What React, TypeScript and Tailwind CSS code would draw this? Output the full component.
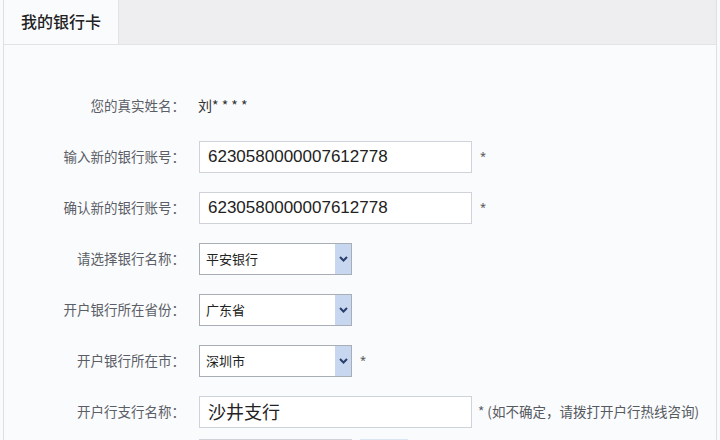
const cjk = { fontFamily: '"Noto Sans CJK SC", "Noto Sans", sans-serif' };
const num = { fontFamily: '"Liberation Sans", Arial, sans-serif' };

function Label({ text }: { text: string }) {
  return (
    <div className="w-[181px] shrink-0 text-right text-[13.5px] text-[#5a5e66]" style={cjk}>
      {text}
    </div>
  );
}

function Select({ value }: { value: string }) {
  return (
    <div className="flex h-[32px] w-[153px] border border-[#a9adb5] bg-white">
      <div className="flex flex-1 items-center pl-[6px] text-[13px] text-[#222]" style={cjk}>
        {value}
      </div>
      <div className="flex w-[16px] items-center justify-center bg-[#c6d7ef]">
        <svg width="9" height="6" viewBox="0 0 9 6">
          <path d="M1 1l3.5 3.5L8 1" fill="none" stroke="#2a3f6b" strokeWidth="2" />
        </svg>
      </div>
    </div>
  );
}

function Input({ value, big }: { value: string; big?: boolean }) {
  return (
    <div
      className={
        "flex h-[32px] w-[273px] items-center border border-[#cfd2d8] bg-white pl-[8px] text-[#222] " +
        (big ? "text-[18px]" : "text-[17px]")
      }
      style={big ? cjk : num}
    >
      {value}
    </div>
  );
}

function Star() {
  return <span className="ml-[8px] text-[11px] text-[#555]">*</span>;
}

export default function App() {
  return (
    <div className="h-[440px] w-[720px] overflow-hidden bg-[#fafbfd]">
      <div className="ml-[3px] h-full w-[714px] border-x border-[#dfe0e4]">
        <div className="flex h-[45px] border-b border-[#e2e3e7]">
          <div
            className="flex w-[114px] items-center justify-center bg-[#fafbfd] pb-[2px] text-[16px] font-medium text-[#222]"
            style={cjk}
          >
            我的银行卡
          </div>
          <div className="flex-1 border-l border-[#e2e3e7] bg-[#eeeef0]" />
        </div>

        <div className="flex flex-col pt-[35px]">
          <div className="flex h-[51px] items-center">
            <Label text="您的真实姓名：" />
            <div className="ml-[13px] text-[14px] text-[#333]" style={cjk}>
              刘* * * *
            </div>
          </div>
          <div className="flex h-[51px] items-center">
            <Label text="输入新的银行账号：" />
            <div className="ml-[14px] flex items-center">
              <Input value="6230580000007612778" />
              <Star />
            </div>
          </div>
          <div className="flex h-[51px] items-center">
            <Label text="确认新的银行账号：" />
            <div className="ml-[14px] flex items-center">
              <Input value="6230580000007612778" />
              <Star />
            </div>
          </div>
          <div className="flex h-[51px] items-center">
            <Label text="请选择银行名称：" />
            <div className="ml-[14px]">
              <Select value="平安银行" />
            </div>
          </div>
          <div className="flex h-[51px] items-center">
            <Label text="开户银行所在省份：" />
            <div className="ml-[14px]">
              <Select value="广东省" />
            </div>
          </div>
          <div className="flex h-[51px] items-center">
            <Label text="开户银行所在市：" />
            <div className="ml-[14px] flex items-center">
              <Select value="深圳市" />
              <Star />
            </div>
          </div>
          <div className="flex h-[51px] items-center">
            <Label text="开户行支行名称：" />
            <div className="ml-[14px] flex items-center">
              <Input value="沙井支行" big />
              <span className="ml-[6px] text-[13.5px] text-[#555a60]" style={cjk}>
                * (如不确定，请拨打开户行热线咨询)
              </span>
            </div>
          </div>
          <div className="flex items-start pl-[195px] pt-[2px]">
            <div className="h-[32px] w-[153px] border border-[#cfd2d8] bg-white" />
            <div className="ml-[8px] h-[32px] w-[48px] bg-[#d8e6f5]" />
          </div>
        </div>
      </div>
    </div>
  );
}
